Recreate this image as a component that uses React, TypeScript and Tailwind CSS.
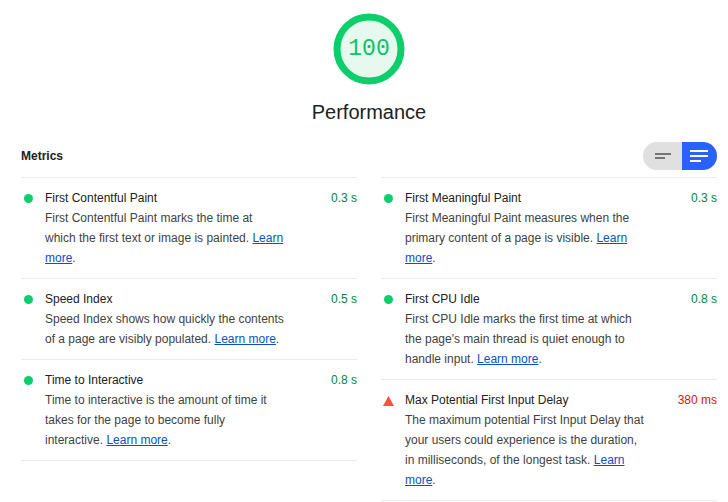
import React from "react";

type Metric = {
  title: string;
  value: string;
  desc: string;
  fail?: boolean;
};

const leftMetrics: Metric[] = [
  {
    title: "First Contentful Paint",
    value: "0.3 s",
    desc: "First Contentful Paint marks the time at which the first text or image is painted.",
  },
  {
    title: "Speed Index",
    value: "0.5 s",
    desc: "Speed Index shows how quickly the contents of a page are visibly populated.",
  },
  {
    title: "Time to Interactive",
    value: "0.8 s",
    desc: "Time to interactive is the amount of time it takes for the page to become fully interactive.",
  },
];

const rightMetrics: Metric[] = [
  {
    title: "First Meaningful Paint",
    value: "0.3 s",
    desc: "First Meaningful Paint measures when the primary content of a page is visible.",
  },
  {
    title: "First CPU Idle",
    value: "0.8 s",
    desc: "First CPU Idle marks the first time at which the page's main thread is quiet enough to handle input.",
  },
  {
    title: "Max Potential First Input Delay",
    value: "380 ms",
    desc: "The maximum potential First Input Delay that your users could experience is the duration, in milliseconds, of the longest task.",
    fail: true,
  },
];

const MetricRow: React.FC<{ m: Metric; last?: boolean }> = ({ m, last }) => (
  <div
    className={`flex border-t border-[#ebebeb] py-[10px] ${last ? "border-b" : ""}`}
  >
    <div className="w-[24px] shrink-0 pl-[3px] pt-[6px]">
      {m.fail ? (
        <svg width="11" height="10" viewBox="0 0 11 10" className="-ml-[1px]">
          <polygon points="5.5,0 11,10 0,10" fill="#ff4e42" />
        </svg>
      ) : (
        <div className="h-[9px] w-[9px] rounded-full bg-[#0cce6b]" />
      )}
    </div>
    <div className="flex-1 text-[12px] leading-[20px]">
      <div className="flex justify-between">
        <span className="text-[#212121]">{m.title}</span>
        <span className={m.fail ? "text-[#eb0f00]" : "text-[#018642]"}>
          {m.value}
        </span>
      </div>
      <div className="w-[240px] text-[#424242]">
        {m.desc}{" "}
        <a href="#" className="text-[#0c50c7] underline">
          Learn more
        </a>
        .
      </div>
    </div>
  </div>
);

export default function App() {
  return (
    <div
      className="min-h-[502px] bg-white pl-[21px] pr-[11px]"
      style={{ fontFamily: '"Liberation Sans", Arial, sans-serif' }}
    >
      <div className="flex flex-col items-center pt-[13px]">
        <div className="relative h-[72px] w-[72px]">
          <svg width="72" height="72" viewBox="0 0 72 72">
            <circle cx="36" cy="36" r="32" fill="#e7f9ef" stroke="#0cce6b" strokeWidth="7" />
          </svg>
          <div
            className="absolute inset-0 flex items-center justify-center text-[23px] text-[#0cc266]"
            style={{ fontFamily: '"Liberation Mono", "DejaVu Sans Mono", monospace' }}
          >
            100
          </div>
        </div>
        <div className="mt-[15px] text-[20px] leading-[24px] text-[#212121]">
          Performance
        </div>
      </div>

      <div className="mt-[18px] flex items-center justify-between pb-[7px]">
        <div className="text-[12px] font-bold text-[#212121]">Metrics</div>
        <div className="flex h-[28px] w-[74px] overflow-hidden rounded-full">
          <div className="flex flex-1 flex-col items-start justify-center gap-[2px] bg-[#e0e0e0] pl-[12px]">
            <div className="h-[2px] w-[16px] bg-[#757575]" />
            <div className="h-[2px] w-[10px] bg-[#757575]" />
          </div>
          <div className="flex flex-1 flex-col items-start justify-center gap-[3px] bg-[#2962ff] pl-[8px]">
            <div className="h-[2px] w-[18px] bg-white" />
            <div className="h-[2px] w-[18px] bg-white" />
            <div className="h-[2px] w-[11px] bg-white" />
          </div>
        </div>
      </div>

      <div className="grid grid-cols-2 gap-x-[24px]">
        <div>
          {leftMetrics.map((m, i) => (
            <MetricRow key={m.title} m={m} last={i === leftMetrics.length - 1} />
          ))}
        </div>
        <div>
          {rightMetrics.map((m, i) => (
            <MetricRow key={m.title} m={m} last={i === rightMetrics.length - 1} />
          ))}
        </div>
      </div>
    </div>
  );
}
